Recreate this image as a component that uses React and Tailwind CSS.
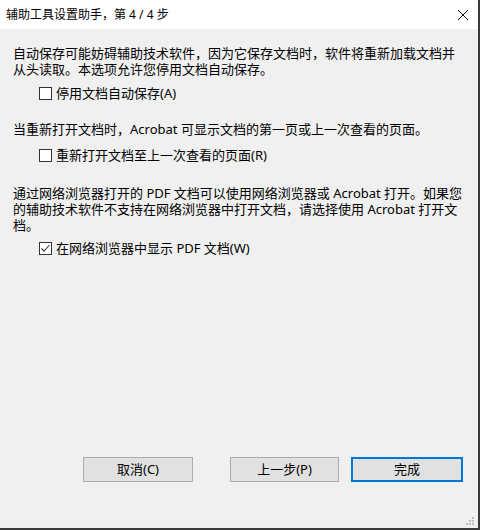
import React from 'react';

const font = { fontFamily: '"Noto Sans", "Noto Sans CJK SC", sans-serif' };

const Check = ({ checked, label }) => (
  <div className="flex items-center h-[13px] pl-[39px]">
    <div className="w-[13px] h-[13px] border border-[#333333] bg-white flex items-center justify-center">
      {checked && (
        <svg width="11" height="11" viewBox="0 0 11 11">
          <polyline points="1.5,5.5 4,8 9.5,2" fill="none" stroke="#333" strokeWidth="1.1" />
        </svg>
      )}
    </div>
    <span className="ml-[4px] text-[13px] leading-[13px] text-black whitespace-nowrap">{label}</span>
  </div>
);

const Btn = ({ children, primary, className }) => (
  <button
    className={
      'h-[25px] bg-[#e1e1e1] text-[13px] text-black flex items-center justify-center ' +
      (primary ? 'border-2 border-[#0078d7] ' : 'border border-[#adadad] ') +
      (className || '')
    }
  >
    {children}
  </button>
);

export default function App() {
  return (
    <div className="w-[480px] h-[530px] flex flex-col border-r-2 border-b-2 border-[#3a3a3a] relative" style={font}>
      <div className="h-[29px] bg-white flex items-center justify-between pl-[6px] pr-[9px] shrink-0">
        <span className="text-[12px] text-black">辅助工具设置助手，第 4 / 4 步</span>
        <svg width="12" height="12" viewBox="0 0 12 12">
          <path d="M1 1 L11 11 M11 1 L1 11" stroke="#111" strokeWidth="1" />
        </svg>
      </div>
      <div className="flex-1 bg-[#f0f0f0] flex flex-col">
        <div className="pl-[13px] pt-[16px] text-[13px] leading-[16px] text-black">
          <div>自动保存可能妨碍辅助技术软件，因为它保存文档时，软件将重新加载文档并</div>
          <div>从头读取。本选项允许您停用文档自动保存。</div>
        </div>
        <div className="mt-[10px]">
          <Check label="停用文档自动保存(A)" />
        </div>
        <div className="pl-[13px] mt-[21px] text-[13px] leading-[16px] text-black">
          <div>当重新打开文档时，Acrobat 可显示文档的第一页或上一次查看的页面。</div>
        </div>
        <div className="mt-[12px]">
          <Check label="重新打开文档至上一次查看的页面(R)" />
        </div>
        <div className="pl-[13px] mt-[23px] text-[13px] leading-[16px] text-black">
          <div>通过网络浏览器打开的 PDF 文档可以使用网络浏览器或 Acrobat 打开。如果您</div>
          <div>的辅助技术软件不支持在网络浏览器中打开文档，请选择使用 Acrobat 打开文</div>
          <div>档。</div>
        </div>
        <div className="mt-[9px]">
          <Check checked label="在网络浏览器中显示 PDF 文档(W)" />
        </div>
        <div className="flex-1" />
        <div className="flex pl-[83px] mb-[46px]">
          <Btn className="w-[110px]">取消(C)</Btn>
          <Btn className="w-[109px] ml-[37px]">上一步(P)</Btn>
          <Btn primary className="w-[112px] ml-[12px]">完成</Btn>
        </div>
      </div>
      <div className="absolute right-[4px] bottom-[3px] grid grid-cols-3 gap-[1px]">
        <span className="w-[2px] h-[2px]" />
        <span className="w-[2px] h-[2px]" />
        <span className="w-[2px] h-[2px] bg-[#bfbfbf]" />
        <span className="w-[2px] h-[2px]" />
        <span className="w-[2px] h-[2px] bg-[#bfbfbf]" />
        <span className="w-[2px] h-[2px] bg-[#bfbfbf]" />
        <span className="w-[2px] h-[2px] bg-[#bfbfbf]" />
        <span className="w-[2px] h-[2px] bg-[#bfbfbf]" />
        <span className="w-[2px] h-[2px] bg-[#bfbfbf]" />
      </div>
    </div>
  );
}
